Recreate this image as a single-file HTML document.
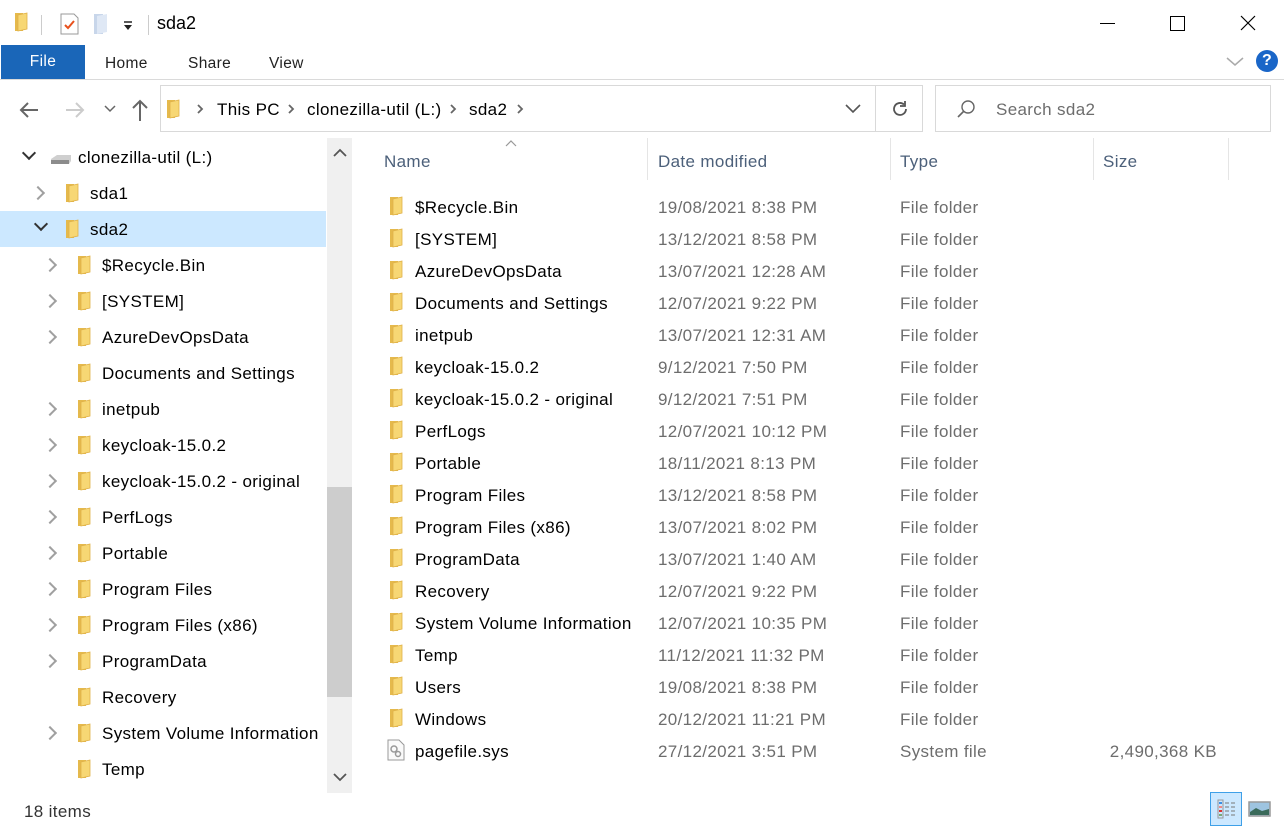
<!DOCTYPE html>
<html><head><meta charset="utf-8"><style>
*{margin:0;padding:0;box-sizing:border-box}
body{width:1284px;height:828px;background:#fff;font-family:"Liberation Sans",sans-serif;font-size:17px;letter-spacing:0.35px;color:#000;position:relative;overflow:hidden}
.a{position:absolute;white-space:nowrap}
div.a{margin-top:1px}
.g{color:#6d6d6d}
.chev{position:absolute;width:10px;height:10px;border-right:2px solid #a0a0a0;border-bottom:2px solid #a0a0a0;transform:rotate(-45deg)}
.chd{position:absolute;width:10px;height:10px;border-right:2px solid #333;border-bottom:2px solid #333;transform:rotate(45deg)}
.hdr{color:#4c607a}
</style></head><body>
<svg width="0" height="0" style="position:absolute"><defs>
<symbol id="fo" viewBox="0 0 14 20"><path d="M1 1 L9 1 L9 19 L1 19Z" fill="#e5b94c"/><path d="M4 3 L13 1 L13 17 L4 19Z" fill="#f7d774"/><path d="M4 3 L13 1 L13 17 L4 19Z" fill="none" stroke="#e0b24a" stroke-width=".8"/></symbol>
</defs></svg>

<svg class="a" style="left:14px;top:12px" width="14" height="20"><use href="#fo"/></svg>
<div class="a" style="left:41px;top:14px;width:1px;height:20px;background:#ccc"></div>
<svg class="a" style="left:60px;top:13px" width="20" height="22"><path d="M1 1h13l4 4v16H1z" fill="#fff" stroke="#999"/><path d="M5 12l3 3 6-7" fill="none" stroke="#e8511d" stroke-width="2"/></svg>
<svg class="a" style="left:93px;top:13px" width="16" height="22"><path d="M1 1h9v20H1z" fill="#c8d6ea"/><path d="M4 3l10-2v18l-10 2z" fill="#dfe8f5"/></svg>
<svg class="a" style="left:122px;top:20px" width="12" height="12"><path d="M2 2h8" stroke="#222" stroke-width="1.5"/><path d="M2 5h8l-4 5z" fill="#222"/></svg>
<div class="a" style="left:148px;top:14px;width:1px;height:20px;background:#ccc"></div>
<div class="a" style="left:157px;top:12px;font-size:18px;letter-spacing:0">sda2</div>
<div class="a" style="left:1100px;top:22px;width:15px;height:1px;background:#000"></div>
<div class="a" style="left:1170px;top:15px;width:15px;height:15px;border:1px solid #000"></div>
<svg class="a" style="left:1240px;top:15px" width="16" height="16"><path d="M1 1L15 15M15 1L1 15" stroke="#000" stroke-width="1.2"/></svg>

<div class="a" style="left:1px;top:44px;width:84px;height:34px;background:#1a66b8;color:#fff;text-align:center;line-height:34px;font-size:15.5px">File</div>
<div class="a" style="left:105px;top:54px;font-size:15.5px;color:#222">Home</div>
<div class="a" style="left:188px;top:54px;font-size:15.5px;color:#222">Share</div>
<div class="a" style="left:269px;top:54px;font-size:15.5px;color:#222">View</div>
<div class="a" style="left:0;top:78px;width:1284px;height:1px;background:#dadada"></div>
<svg class="a" style="left:1226px;top:56px" width="18" height="12"><path d="M1 2l8 7 8-7" fill="none" stroke="#aaa" stroke-width="1.5"/></svg>
<div class="a" style="left:1256px;top:49px;width:22px;height:22px;border-radius:50%;background:#1a66c8;color:#fff;font-weight:bold;font-size:16px;text-align:center;line-height:22px">?</div>

<svg class="a" style="left:18px;top:100px" width="22" height="20"><path d="M20 10H3M10 3L3 10l7 7" fill="none" stroke="#666" stroke-width="2"/></svg>
<svg class="a" style="left:64px;top:100px" width="22" height="20"><path d="M2 10h17M12 3l7 7-7 7" fill="none" stroke="#ccc" stroke-width="2"/></svg>
<svg class="a" style="left:104px;top:105px" width="12" height="8"><path d="M1 1l5 5 5-5" fill="none" stroke="#666" stroke-width="1.5"/></svg>
<svg class="a" style="left:130px;top:98px" width="20" height="24"><path d="M10 23V3M3 10l7-7 7 7" fill="none" stroke="#666" stroke-width="2"/></svg>
<div class="a" style="left:160px;top:84px;width:716px;height:47px;border:1px solid #d9d9d9"></div>
<div class="a" style="left:875px;top:84px;width:48px;height:47px;border:1px solid #d9d9d9"></div>
<svg class="a" style="left:166px;top:99px" width="14" height="20"><use href="#fo"/></svg>
<svg class="a" style="left:196px;top:103px" width="8" height="12"><path d="M2 2l4 4-4 4" fill="none" stroke="#666" stroke-width="1.8"/></svg>
<div class="a" style="left:217px;top:99px">This PC</div>
<svg class="a" style="left:287px;top:103px" width="8" height="12"><path d="M2 2l4 4-4 4" fill="none" stroke="#666" stroke-width="1.8"/></svg>
<div class="a" style="left:307px;top:99px">clonezilla-util (L:)</div>
<svg class="a" style="left:449px;top:103px" width="8" height="12"><path d="M2 2l4 4-4 4" fill="none" stroke="#666" stroke-width="1.8"/></svg>
<div class="a" style="left:469px;top:99px">sda2</div>
<svg class="a" style="left:516px;top:103px" width="8" height="12"><path d="M2 2l4 4-4 4" fill="none" stroke="#666" stroke-width="1.8"/></svg>
<svg class="a" style="left:845px;top:104px" width="16" height="10"><path d="M1 1l7 7 7-7" fill="none" stroke="#555" stroke-width="1.6"/></svg>
<svg class="a" style="left:890px;top:99px" width="20" height="20"><path d="M16 10a6 6 0 1 1-2-4.5" fill="none" stroke="#555" stroke-width="1.8"/><path d="M15 2v5h-5" fill="none" stroke="#555" stroke-width="1.8"/></svg>
<div class="a" style="left:935px;top:84px;width:336px;height:47px;border:1px solid #d9d9d9"></div>
<svg class="a" style="left:956px;top:99px" width="20" height="20"><circle cx="12" cy="8" r="6" fill="none" stroke="#666" stroke-width="1.4"/><path d="M8 12L2 18" stroke="#666" stroke-width="1.6"/></svg>
<div class="a" style="left:996px;top:99px;color:#6d6d6d">Search sda2</div>

<div class="a" style="left:0;top:210px;width:326px;height:36px;background:#cce8ff"></div>
<div class="a" style="left:327px;top:137px;width:25px;height:655px;background:#f0f0f0"></div>
<div class="a" style="left:327px;top:486px;width:25px;height:210px;background:#cdcdcd"></div>
<svg class="a" style="left:333px;top:148px" width="14" height="9"><path d="M1 8l6-6 6 6" fill="none" stroke="#555" stroke-width="1.8"/></svg>
<svg class="a" style="left:333px;top:773px" width="14" height="9"><path d="M1 1l6 6 6-6" fill="none" stroke="#555" stroke-width="1.8"/></svg>

<div class="chd" style="left:24px;top:148px"></div>
<svg class="a" style="left:49px;top:151px" width="24" height="16"><path d="M2 8l6-4h14v6l-2 3H3z" fill="#cfcfcf"/><path d="M2 9h18v4H2z" fill="#8c8c8c"/></svg>
<div class="a" style="left:78px;top:147px">clonezilla-util (L:)</div>

<div class="chev" style="left:33px;top:188px"></div>
<svg class="a" style="left:65px;top:183px" width="14" height="20"><use href="#fo"/></svg>
<div class="a" style="left:90px;top:183px">sda1</div>
<div class="chd" style="left:36px;top:219px"></div>
<svg class="a" style="left:65px;top:219px" width="14" height="20"><use href="#fo"/></svg>
<div class="a" style="left:90px;top:219px">sda2</div>

<div class="chev" style="left:45px;top:260px"></div><svg class="a" style="left:77px;top:255px" width="14" height="20"><use href="#fo"/></svg><div class="a" style="left:102px;top:255px">$Recycle.Bin</div>
<div class="chev" style="left:45px;top:296px"></div><svg class="a" style="left:77px;top:291px" width="14" height="20"><use href="#fo"/></svg><div class="a" style="left:102px;top:291px">[SYSTEM]</div>
<div class="chev" style="left:45px;top:332px"></div><svg class="a" style="left:77px;top:327px" width="14" height="20"><use href="#fo"/></svg><div class="a" style="left:102px;top:327px">AzureDevOpsData</div>
<svg class="a" style="left:77px;top:363px" width="14" height="20"><use href="#fo"/></svg><div class="a" style="left:102px;top:363px">Documents and Settings</div>
<div class="chev" style="left:45px;top:404px"></div><svg class="a" style="left:77px;top:399px" width="14" height="20"><use href="#fo"/></svg><div class="a" style="left:102px;top:399px">inetpub</div>
<div class="chev" style="left:45px;top:440px"></div><svg class="a" style="left:77px;top:435px" width="14" height="20"><use href="#fo"/></svg><div class="a" style="left:102px;top:435px">keycloak-15.0.2</div>
<div class="chev" style="left:45px;top:476px"></div><svg class="a" style="left:77px;top:471px" width="14" height="20"><use href="#fo"/></svg><div class="a" style="left:102px;top:471px">keycloak-15.0.2 - original</div>
<div class="chev" style="left:45px;top:512px"></div><svg class="a" style="left:77px;top:507px" width="14" height="20"><use href="#fo"/></svg><div class="a" style="left:102px;top:507px">PerfLogs</div>
<div class="chev" style="left:45px;top:548px"></div><svg class="a" style="left:77px;top:543px" width="14" height="20"><use href="#fo"/></svg><div class="a" style="left:102px;top:543px">Portable</div>
<div class="chev" style="left:45px;top:584px"></div><svg class="a" style="left:77px;top:579px" width="14" height="20"><use href="#fo"/></svg><div class="a" style="left:102px;top:579px">Program Files</div>
<div class="chev" style="left:45px;top:620px"></div><svg class="a" style="left:77px;top:615px" width="14" height="20"><use href="#fo"/></svg><div class="a" style="left:102px;top:615px">Program Files (x86)</div>
<div class="chev" style="left:45px;top:656px"></div><svg class="a" style="left:77px;top:651px" width="14" height="20"><use href="#fo"/></svg><div class="a" style="left:102px;top:651px">ProgramData</div>
<svg class="a" style="left:77px;top:687px" width="14" height="20"><use href="#fo"/></svg><div class="a" style="left:102px;top:687px">Recovery</div>
<div class="chev" style="left:45px;top:728px"></div><svg class="a" style="left:77px;top:723px" width="14" height="20"><use href="#fo"/></svg><div class="a" style="left:102px;top:723px">System Volume Information</div>
<svg class="a" style="left:77px;top:759px" width="14" height="20"><use href="#fo"/></svg><div class="a" style="left:102px;top:759px">Temp</div>

<svg class="a" style="left:505px;top:140px" width="12" height="8"><path d="M1 6l5-5 5 5" fill="none" stroke="#999" stroke-width="1.2"/></svg>
<div class="a hdr" style="left:384px;top:151px">Name</div>
<div class="a" style="left:647px;top:137px;width:1px;height:42px;background:#e5e5e5"></div>
<div class="a hdr" style="left:658px;top:151px">Date modified</div>
<div class="a" style="left:890px;top:137px;width:1px;height:42px;background:#e5e5e5"></div>
<div class="a hdr" style="left:900px;top:151px">Type</div>
<div class="a" style="left:1093px;top:137px;width:1px;height:42px;background:#e5e5e5"></div>
<div class="a hdr" style="left:1103px;top:151px">Size</div>
<div class="a" style="left:1228px;top:137px;width:1px;height:42px;background:#e5e5e5"></div>

<svg class="a" style="left:389px;top:196px" width="14" height="20"><use href="#fo"/></svg><div class="a" style="left:415px;top:197px">$Recycle.Bin</div><div class="a g" style="left:658px;top:197px">19/08/2021 8:38 PM</div><div class="a g" style="left:900px;top:197px">File folder</div>
<svg class="a" style="left:389px;top:228px" width="14" height="20"><use href="#fo"/></svg><div class="a" style="left:415px;top:229px">[SYSTEM]</div><div class="a g" style="left:658px;top:229px">13/12/2021 8:58 PM</div><div class="a g" style="left:900px;top:229px">File folder</div>
<svg class="a" style="left:389px;top:260px" width="14" height="20"><use href="#fo"/></svg><div class="a" style="left:415px;top:261px">AzureDevOpsData</div><div class="a g" style="left:658px;top:261px">13/07/2021 12:28 AM</div><div class="a g" style="left:900px;top:261px">File folder</div>
<svg class="a" style="left:389px;top:292px" width="14" height="20"><use href="#fo"/></svg><div class="a" style="left:415px;top:293px">Documents and Settings</div><div class="a g" style="left:658px;top:293px">12/07/2021 9:22 PM</div><div class="a g" style="left:900px;top:293px">File folder</div>
<svg class="a" style="left:389px;top:324px" width="14" height="20"><use href="#fo"/></svg><div class="a" style="left:415px;top:325px">inetpub</div><div class="a g" style="left:658px;top:325px">13/07/2021 12:31 AM</div><div class="a g" style="left:900px;top:325px">File folder</div>
<svg class="a" style="left:389px;top:356px" width="14" height="20"><use href="#fo"/></svg><div class="a" style="left:415px;top:357px">keycloak-15.0.2</div><div class="a g" style="left:658px;top:357px">9/12/2021 7:50 PM</div><div class="a g" style="left:900px;top:357px">File folder</div>
<svg class="a" style="left:389px;top:388px" width="14" height="20"><use href="#fo"/></svg><div class="a" style="left:415px;top:389px">keycloak-15.0.2 - original</div><div class="a g" style="left:658px;top:389px">9/12/2021 7:51 PM</div><div class="a g" style="left:900px;top:389px">File folder</div>
<svg class="a" style="left:389px;top:420px" width="14" height="20"><use href="#fo"/></svg><div class="a" style="left:415px;top:421px">PerfLogs</div><div class="a g" style="left:658px;top:421px">12/07/2021 10:12 PM</div><div class="a g" style="left:900px;top:421px">File folder</div>
<svg class="a" style="left:389px;top:452px" width="14" height="20"><use href="#fo"/></svg><div class="a" style="left:415px;top:453px">Portable</div><div class="a g" style="left:658px;top:453px">18/11/2021 8:13 PM</div><div class="a g" style="left:900px;top:453px">File folder</div>
<svg class="a" style="left:389px;top:484px" width="14" height="20"><use href="#fo"/></svg><div class="a" style="left:415px;top:485px">Program Files</div><div class="a g" style="left:658px;top:485px">13/12/2021 8:58 PM</div><div class="a g" style="left:900px;top:485px">File folder</div>
<svg class="a" style="left:389px;top:516px" width="14" height="20"><use href="#fo"/></svg><div class="a" style="left:415px;top:517px">Program Files (x86)</div><div class="a g" style="left:658px;top:517px">13/07/2021 8:02 PM</div><div class="a g" style="left:900px;top:517px">File folder</div>
<svg class="a" style="left:389px;top:548px" width="14" height="20"><use href="#fo"/></svg><div class="a" style="left:415px;top:549px">ProgramData</div><div class="a g" style="left:658px;top:549px">13/07/2021 1:40 AM</div><div class="a g" style="left:900px;top:549px">File folder</div>
<svg class="a" style="left:389px;top:580px" width="14" height="20"><use href="#fo"/></svg><div class="a" style="left:415px;top:581px">Recovery</div><div class="a g" style="left:658px;top:581px">12/07/2021 9:22 PM</div><div class="a g" style="left:900px;top:581px">File folder</div>
<svg class="a" style="left:389px;top:612px" width="14" height="20"><use href="#fo"/></svg><div class="a" style="left:415px;top:613px">System Volume Information</div><div class="a g" style="left:658px;top:613px">12/07/2021 10:35 PM</div><div class="a g" style="left:900px;top:613px">File folder</div>
<svg class="a" style="left:389px;top:644px" width="14" height="20"><use href="#fo"/></svg><div class="a" style="left:415px;top:645px">Temp</div><div class="a g" style="left:658px;top:645px">11/12/2021 11:32 PM</div><div class="a g" style="left:900px;top:645px">File folder</div>
<svg class="a" style="left:389px;top:676px" width="14" height="20"><use href="#fo"/></svg><div class="a" style="left:415px;top:677px">Users</div><div class="a g" style="left:658px;top:677px">19/08/2021 8:38 PM</div><div class="a g" style="left:900px;top:677px">File folder</div>
<svg class="a" style="left:389px;top:708px" width="14" height="20"><use href="#fo"/></svg><div class="a" style="left:415px;top:709px">Windows</div><div class="a g" style="left:658px;top:709px">20/12/2021 11:21 PM</div><div class="a g" style="left:900px;top:709px">File folder</div>
<svg class="a" style="left:387px;top:739px" width="18" height="22"><path d="M1 1h11l5 5v15H1z" fill="#fafafa" stroke="#999"/><circle cx="7" cy="10" r="3" fill="none" stroke="#999" stroke-width="1.5"/><circle cx="11" cy="15" r="2.5" fill="none" stroke="#999" stroke-width="1.5"/></svg><div class="a" style="left:415px;top:741px">pagefile.sys</div><div class="a g" style="left:658px;top:741px">27/12/2021 3:51 PM</div><div class="a g" style="left:900px;top:741px">System file</div><div class="a g" style="left:1217px;top:741px;transform:translateX(-100%)">2,490,368 KB</div>

<div class="a" style="left:24px;top:801px;color:#333">18 items</div>
<div class="a" style="left:1210px;top:792px;width:32px;height:34px;background:#cce8ff;border:1px solid #3ea0e8;margin-top:0"></div>
<svg class="a" style="left:1215px;top:797px" width="24" height="24"><rect x="3" y="3" width="5" height="18" fill="none" stroke="#999"/><rect x="4" y="5" width="3" height="2" fill="#3a8ee6"/><rect x="4" y="9" width="3" height="2" fill="#e88"/><rect x="4" y="13" width="3" height="2" fill="#d33"/><rect x="4" y="17" width="3" height="2" fill="#7a7"/><path d="M10 6h4m2 0h4M10 10h4m2 0h4M10 14h4m2 0h4M10 18h4m2 0h4" stroke="#777" stroke-width="1"/></svg>
<svg class="a" style="left:1248px;top:801px" width="24" height="18"><rect x="1" y="1" width="21" height="14" fill="#9ec4e0" stroke="#999" stroke-width="1.5"/><path d="M2 11l6-4 6 3 7-2v6H2z" fill="#3a6a5a"/></svg>
</body></html>
